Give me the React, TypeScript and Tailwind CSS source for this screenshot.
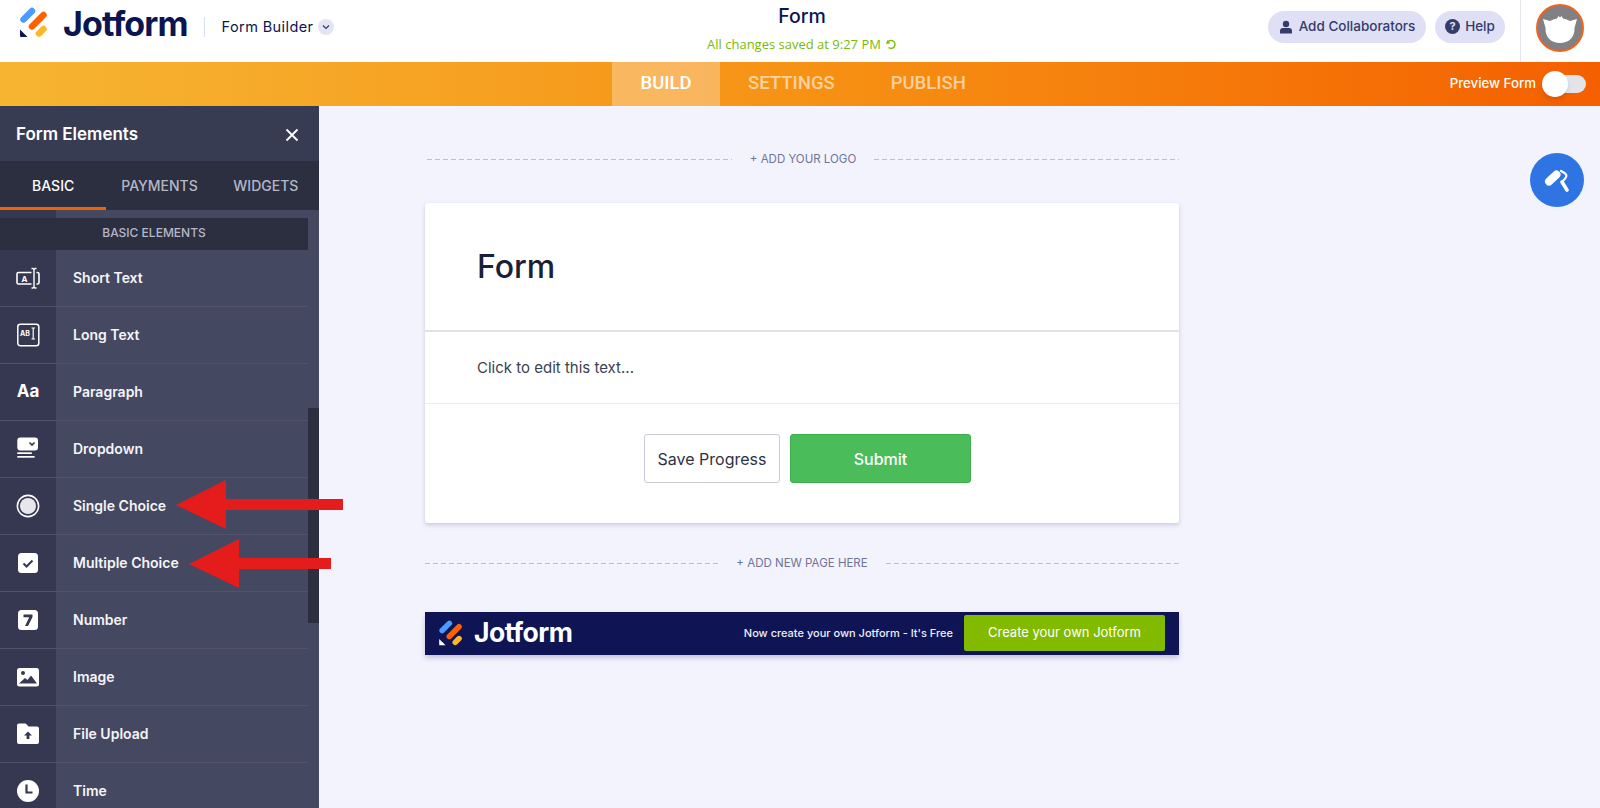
import type { ReactNode } from "react";

const DARK = "#353850";

const JotformMark = ({ corner, className }: { corner: string; className: string }) => (
  <svg viewBox="20 8 28 32" className={className}>
    <line x1="23.5" y1="20.5" x2="32" y2="12" stroke="#4c9bff" strokeWidth="6.5" strokeLinecap="round" />
    <line x1="32" y1="27.5" x2="43.5" y2="16" stroke="#ff6100" strokeWidth="6.5" strokeLinecap="round" />
    <line x1="39" y1="34.5" x2="43.5" y2="30" stroke="#ffb629" strokeWidth="6.5" strokeLinecap="round" />
    <path d="M20 30.5 V37 a1 1 0 0 0 1 1 H27.5 Z" fill={corner} />
  </svg>
);

const Svg = ({ children }: { children: ReactNode }) => (
  <svg viewBox="0 0 24 24" className="w-6 h-6">
    {children}
  </svg>
);

const icons: Record<string, ReactNode> = {
  "Short Text": (
    <Svg>
      <path d="M15.5 6.5 H2.5 a1.5 1.5 0 0 0 -1.5 1.5 V16.5 a1.5 1.5 0 0 0 1.5 1.5 H15.5 M20.5 6.5 H21.5 a1.5 1.5 0 0 1 1.5 1.5 V16.5 a1.5 1.5 0 0 1 -1.5 1.5 H20.5" fill="none" stroke="#fff" strokeWidth="1.6" />
      <path d="M15.5 2.5 h1.5 l1 1 l1 -1 h1.5 M18 3.5 V21 M15.5 22 h1.5 l1 -1 l1 1 h1.5" fill="none" stroke="#fff" strokeWidth="1.4" />
      <text x="8.5" y="15.5" fontSize="8" fontWeight="700" fill="#fff" textAnchor="middle" fontFamily="Inter">A</text>
    </Svg>
  ),
  "Long Text": (
    <Svg>
      <rect x="1.8" y="1.2" width="21" height="21.6" rx="2.5" fill="none" stroke="#fff" strokeWidth="1.5" />
      <text x="9" y="12.5" fontSize="7" fontWeight="700" fill="#fff" textAnchor="middle" fontFamily="Inter">AB</text>
      <path d="M15.5 5 h3.5 M17.2 5 V16 M15.5 16 h3.5" fill="none" stroke="#fff" strokeWidth="1.2" />
    </Svg>
  ),
  Paragraph: <span className="text-[17px] font-bold text-white">Aa</span>,
  Dropdown: (
    <Svg>
      <rect x="1.3" y="0.5" width="20.7" height="13" rx="3" fill="#fff" />
      <path d="M13.5 5.5 l2.5 2.5 l2.5 -2.5" fill="none" stroke={DARK} strokeWidth="1.7" />
      <rect x="1.3" y="15.3" width="14.5" height="1.7" fill="#fff" />
      <rect x="1.3" y="19" width="17.3" height="1.7" fill="#fff" />
    </Svg>
  ),
  "Single Choice": (
    <Svg>
      <circle cx="12" cy="12" r="10.6" fill="none" stroke="#fff" strokeWidth="1.6" />
      <circle cx="12" cy="12" r="8" fill="#e6e6ec" />
    </Svg>
  ),
  "Multiple Choice": (
    <Svg>
      <rect x="2" y="2" width="20" height="20" rx="3.5" fill="#fff" />
      <path d="M7.5 12.5 l3 3 l6 -6" fill="none" stroke={DARK} strokeWidth="2" />
    </Svg>
  ),
  Number: (
    <Svg>
      <rect x="2" y="2" width="20" height="20" rx="3.5" fill="#fff" />
      <path d="M7.5 6.5 h9 v2.5 l-4.5 9 h-3 l4.3 -8.8 h-5.8 Z" fill={DARK} />
    </Svg>
  ),
  Image: (
    <Svg>
      <rect x="1" y="3" width="22" height="18.5" rx="2.5" fill="#fff" />
      <circle cx="7" cy="8" r="2" fill={DARK} />
      <path d="M3 18.5 l6 -5.5 l2.5 2 l3.5 -4.5 l6 8 Z" fill={DARK} />
    </Svg>
  ),
  "File Upload": (
    <Svg>
      <path d="M3 1.5 h6 a2 2 0 0 1 1.5 .7 l2 2.3 H21 a2 2 0 0 1 2 2 V20 a2 2 0 0 1 -2 2 H3 a2 2 0 0 1 -2 -2 V3.5 a2 2 0 0 1 2 -2 Z" fill="#fff" />
      <path d="M12 9.5 l4 4 h-2.6 v3.5 h-2.8 v-3.5 H8 Z" fill={DARK} />
    </Svg>
  ),
  Time: (
    <Svg>
      <circle cx="12" cy="12" r="11" fill="#fff" />
      <path d="M10.5 5.5 V13.5 H16.5" fill="none" stroke={DARK} strokeWidth="2.2" />
    </Svg>
  ),
};

const Row = ({ label }: { label: string }) => (
  <div className="flex h-[57px] shrink-0 border-b border-[#50536a]">
    <div className="flex w-14 items-center justify-center bg-[#353850]">{icons[label]}</div>
    <div className="flex flex-1 items-center pl-[17px] text-sm font-semibold text-[#f4f4f8]">{label}</div>
  </div>
);

const Dashes = () => (
  <div className="h-px flex-1 bg-[repeating-linear-gradient(90deg,#b9bbdf_0,#b9bbdf_5px,transparent_5px,transparent_8px)]" />
);

const AddLine = ({ label, className }: { label: string; className: string }) => (
  <div className={`flex items-center gap-[18px] ${className}`}>
    <Dashes />
    <span className="text-[11.5px] text-[#6f7398]">{label}</span>
    <Dashes />
  </div>
);

const App = () => {
  return (
    <div className="relative flex h-screen flex-col overflow-hidden bg-[#f3f3fe] font-['Inter',sans-serif]">
      {/* Top header */}
      <header className="flex h-[62px] shrink-0 items-center bg-white">
        <div className="flex w-[600px] items-center pb-2 pl-5">
          <JotformMark corner="#0a1551" className="mb-2 h-8 w-7" />
          <span className="mb-[6px] ml-[15px] text-[34px] font-bold leading-none tracking-[-0.9px] text-[#0a1551]">Jotform</span>
          <div className="ml-4 h-5 w-px bg-[#dadef3]" />
          <span className="ml-[17px] text-[14.5px] tracking-[0.4px] text-[#0a1551]">Form Builder</span>
          <span className="ml-[5px] flex h-4 w-4 items-center justify-center rounded-full bg-[#e3e5f5]">
            <svg viewBox="0 0 10 10" className="h-2.5 w-2.5">
              <path d="M2 3.5 L5 6.5 L8 3.5" fill="none" stroke="#343c6a" strokeWidth="1.2" />
            </svg>
          </span>
        </div>
        <div className="flex flex-1 flex-col items-center pb-[6px] pl-[4px]">
          <span className="text-[19.5px] font-medium leading-6 text-[#0a1551]">Form</span>
          <span className="mt-2 flex items-center gap-1 font-['Open_Sans',sans-serif] text-[13px] leading-4 text-[#78bb07]">
            All changes saved at 9:27 PM
            <svg viewBox="0 0 12 12" className="h-3 w-3">
              <path d="M3 2.5 L2 5 L4.6 5 M2.3 4.8 A4 4 0 1 1 3.5 9.5" fill="none" stroke="#78bb07" strokeWidth="1.4" />
            </svg>
          </span>
        </div>
        <div className="flex w-[600px] items-center justify-end">
          <button className="mb-[9px] flex h-8 w-[158px] items-center justify-center gap-[6px] rounded-full bg-[#dfe0f5] text-[13.5px] font-medium text-[#343c6a]">
            <svg viewBox="0 0 14 14" className="h-[14px] w-[14px]">
              <circle cx="7" cy="4" r="3.2" fill="#343c6a" />
              <path d="M1 13.5 V11 a3 3 0 0 1 3 -3 h6 a3 3 0 0 1 3 3 v2.5 Z" fill="#343c6a" />
            </svg>
            Add Collaborators
          </button>
          <button className="mb-[9px] ml-[9px] flex h-8 w-[70px] items-center justify-center gap-[5px] rounded-full bg-[#dfe0f5] text-[13.5px] font-medium text-[#343c6a]">
            <span className="flex h-[15px] w-[15px] items-center justify-center rounded-full bg-[#343c6a] text-[11px] font-bold text-[#dfe0f5]">?</span>
            Help
          </button>
          <div className="ml-[15px] flex h-[62px] w-20 items-center border-l border-[#e3e5f0] pb-[7px] pl-[15px]">
            <div className="h-12 w-12 rounded-full border-2 border-[#f0641e] bg-[#808085]">
              <svg viewBox="2 2 44 44" className="h-full w-full">
                <path d="M7 15 L14 17 Q17 15 21 14.5 L22.5 12 L24 13.5 L25.5 12 L27 14.5 Q31 15 34 17 L41 15 L38.5 24 C39 34 32 39 24 39 C16 39 9 34 9.5 24 Z" fill="#fff" />
              </svg>
            </div>
          </div>
        </div>
      </header>

      {/* Orange nav */}
      <nav className="flex h-11 shrink-0 items-center bg-linear-to-r from-[#f6b531] via-[#f69214] to-[#f45f00] pl-[612px] pr-[14px] text-white">
        <div className="flex h-full w-[108px] items-center justify-center bg-white/30 font-['Roboto',sans-serif] text-[18.5px] font-medium">BUILD</div>
        <div className="ml-7 font-['Roboto',sans-serif] text-[18.5px] font-medium text-white/60">SETTINGS</div>
        <div className="ml-14 font-['Roboto',sans-serif] text-[18.5px] font-medium text-white/60">PUBLISH</div>
        <span className="ml-auto text-[13.25px] font-medium">Preview Form</span>
        <div className="relative ml-[7px] h-[18px] w-[43px] rounded-full bg-[#e3e4ea]">
          <div className="absolute left-[-1px] top-[-4px] h-[26px] w-[26px] rounded-full bg-white shadow-md" />
        </div>
      </nav>

      <div className="flex min-h-0 flex-1">
        {/* Sidebar */}
        <aside className="flex w-[319px] shrink-0 flex-col bg-[#444860]">
          <div className="flex h-[55px] shrink-0 items-center justify-between bg-[#383c52] pl-4 pr-[20px] pt-[3px]">
            <span className="text-[17px] font-semibold text-white">Form Elements</span>
            <svg viewBox="0 0 14 14" className="h-[14px] w-[14px]">
              <path d="M1.5 1.5 L12.5 12.5 M12.5 1.5 L1.5 12.5" stroke="#fff" strokeWidth="1.8" />
            </svg>
          </div>
          <div className="grid h-[49px] shrink-0 grid-cols-3 bg-[#2c2f40] text-sm font-medium text-[#b5b7c6]">
            <div className="flex items-center justify-center border-b-[3px] border-[#f26200] pt-[3px] text-white">BASIC</div>
            <div className="flex items-center justify-center">PAYMENTS</div>
            <div className="flex items-center justify-center">WIDGETS</div>
          </div>
          <div className="flex min-h-0 flex-1">
            <div className="flex w-[308px] shrink-0 flex-col overflow-hidden">
              <div className="h-2 w-14 shrink-0 bg-[#353850]" />
              <div className="flex h-8 shrink-0 items-center justify-center bg-[#2c2f40] pb-[2px] text-xs font-medium text-[#b5b7c6]">BASIC ELEMENTS</div>
              {Object.keys(icons).map((label) => (
                <Row key={label} label={label} />
              ))}
            </div>
            <div className="flex-1 pt-[198px]">
              <div className="h-[215px] bg-[#2c2f40]" />
            </div>
          </div>
        </aside>

        {/* Form canvas */}
        <main className="relative flex-1 pl-[106px]">
          <div className="flex w-[754px] flex-col">
            <AddLine label="+ ADD YOUR LOGO" className="mt-[45px] pl-[2px]" />
            <section className="mt-[35px] h-[320px] rounded-[3px] bg-white shadow-[0_2px_4px_rgba(80,85,130,0.25)]">
              <div className="flex h-[129px] items-center border-b-2 border-[#dfe0ea] pl-[52px]">
                <h1 className="text-[32px] font-medium text-[#1a2036]">Form</h1>
              </div>
              <div className="flex h-[72px] items-center border-b border-[#eaebf2] pl-[52px] text-[15px] text-[#3b3f52]">Click to edit this text...</div>
              <div className="flex justify-center gap-[10px] pl-[11px] pt-[30px]">
                <button className="h-[49px] w-[136px] rounded-[3px] border border-[#c8cadb] text-base text-[#2c3345]">Save Progress</button>
                <button className="h-[49px] w-[181px] rounded-[3px] border border-[#3bb04c] bg-[#4abd5a] text-base font-medium text-white">Submit</button>
              </div>
            </section>
            <AddLine label="+ ADD NEW PAGE HERE" className="mt-[32px]" />
            <div className="mt-[39px] flex h-[43px] items-center bg-[#0f1554] px-[14px] shadow-[0_3px_5px_rgba(80,85,130,0.3)]">
              <JotformMark corner="#ffffff" className="h-[27px] w-6" />
              <span className="ml-[11px] text-[26.5px] font-bold tracking-[-0.5px] text-white">Jotform</span>
              <span className="ml-auto text-[11px] font-medium text-[#eceef8]">Now create your own Jotform - It's Free</span>
              <button className="ml-[11px] h-9 w-[201px] rounded-[2px] bg-[#82ba00] text-[13px] text-white">Create your own Jotform</button>
            </div>
          </div>
          <button className="absolute right-4 top-[47px] h-[54px] w-[54px] rounded-full bg-[#2f74e3]">
            <svg viewBox="0 0 54 54" className="h-full w-full">
              <line x1="19" y1="28.5" x2="26.5" y2="21.5" stroke="#fff" strokeWidth="8" strokeLinecap="round" />
              <path d="M31 18 L34.5 20 Q37.5 22 35.5 25 L32 29" fill="none" stroke="#fff" strokeWidth="2.2" strokeLinecap="round" />
              <line x1="32" y1="29" x2="37" y2="37" stroke="#fff" strokeWidth="3.6" strokeLinecap="round" />
            </svg>
          </button>
        </main>
      </div>

      {/* Annotation arrows */}
      <svg className="pointer-events-none absolute inset-0 h-full w-full" viewBox="0 0 1600 808">
        <path d="M176 505 L226 480 V499 H343 V510 H226 V529 Z" fill="#e51c1c" />
        <path d="M189 564 L239 539 V558 H331 V569 H239 V588 Z" fill="#e51c1c" />
      </svg>
    </div>
  );
};

export default App;
